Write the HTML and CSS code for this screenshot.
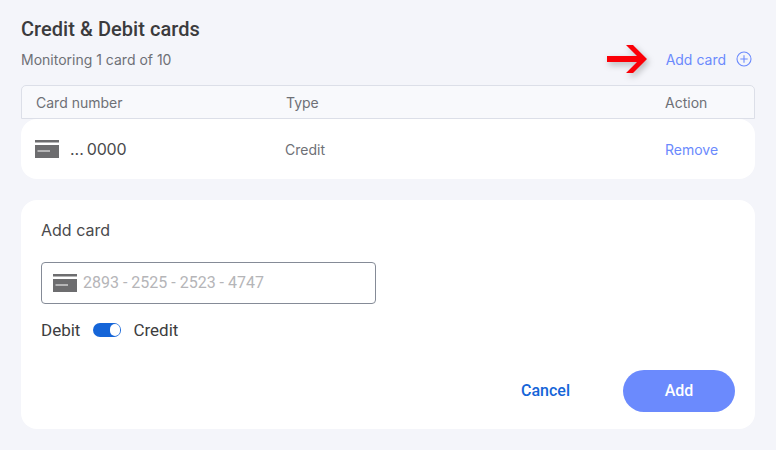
FILE: index.html
```html
<!DOCTYPE html>
<html lang="en">
<head>
<meta charset="utf-8">
<title>Credit &amp; Debit cards</title>
<link rel="stylesheet" href="styles.css">
</head>
<body>
<main class="page">
  <h1 class="title">Credit &amp; Debit cards</h1>
  <div class="sub-row">
    <span class="sub">Monitoring 1 card of 10</span>
    <div class="add-link-wrap">
      <svg class="arrow" width="40" height="32" viewBox="0 0 40 32"><path d="M0 13H31V19H0Z M19 2H26L40 16L26 30H19L30 19V13Z" fill="#fb0007"/></svg>
      <a class="add-link">Add card</a>
      <svg class="plus" width="16" height="16" viewBox="0 0 16 16" fill="none" stroke="#6b8afd" stroke-width="1.1"><circle cx="8" cy="8" r="7"/><path d="M8 4.3V11.7M4.3 8H11.7"/></svg>
    </div>
  </div>
  <div class="table-head">
    <span class="col-num">Card number</span>
    <span class="col-type">Type</span>
    <span class="col-action">Action</span>
  </div>
  <div class="table-row">
    <div class="col-num num-cell">
      <svg class="card-icon" width="24" height="18" viewBox="0 0 24 18"><path d="M0 0H24V2.5H0Z M0 5H24V18H0Z" fill="#6d6d6f"/><path d="M2.5 11H15" stroke="#fff" stroke-width="1"/></svg>
      <span class="masked">...</span><span class="digits">0000</span>
    </div>
    <span class="col-type type-cell">Credit</span>
    <a class="col-action remove">Remove</a>
  </div>
  <section class="form-card">
    <h2 class="form-title">Add card</h2>
    <div class="field">
      <svg class="card-icon" width="24" height="18" viewBox="0 0 24 18"><path d="M0 0H24V2.5H0Z M0 5H24V18H0Z" fill="#6d6d6f"/><path d="M2.5 11H15" stroke="#fff" stroke-width="1"/></svg>
      <span class="placeholder">2893 - 2525 - 2523 - 4747</span>
    </div>
    <div class="toggle-row">
      <span>Debit</span>
      <span class="toggle"><span class="knob"></span></span>
      <span>Credit</span>
    </div>
    <div class="actions">
      <button class="cancel">Cancel</button>
      <button class="add">Add</button>
    </div>
  </section>
</main>
</body>
</html>
```

FILE: styles.css
```css
* { box-sizing: border-box; }
html, body { margin: 0; padding: 0; }
body { width: 776px; height: 450px; overflow: hidden; background: #f4f5fa; font-family: Inter, sans-serif; }
.page { padding: 18px 21px 0; }
.title { margin: 0; height: 22px; font: 500 20px/22px Roboto, sans-serif; letter-spacing: 0.05px; color: #3b3b3d; }
.sub-row { display: flex; align-items: center; justify-content: space-between; height: 30px; margin-top: 4px; margin-bottom: 11px; }
.sub { font-size: 14px; color: #6e7076; }
.add-link-wrap { display: flex; align-items: center; padding-right: 3px; }
.arrow { margin-right: 19px; filter: drop-shadow(2px 3px 3px rgba(0, 0, 0, 0.25)); }
.add-link { font-size: 14px; color: #6b8afd; margin-right: 10px; }
.plus { display: block; }
.table-head { display: flex; align-items: center; height: 34px; background: #f8f9fc; border: 1px solid #dcdfe8; border-radius: 5px 5px 0 0; padding-left: 14px; font-size: 14px; color: #6e7076; }
.col-num { width: 250px; }
.col-type { width: 379px; }
.table-row { display: flex; align-items: center; height: 60px; background: #fff; border-radius: 16px; padding-left: 14px; }
.num-cell { display: flex; align-items: center; font-size: 16px; color: #4a4a4c; }
.card-icon { display: block; flex: none; }
.masked { margin-left: 11px; }
.digits { margin-left: 3px; letter-spacing: -0.2px; }
.type-cell { font-size: 14px; color: #6e7076; }
.remove { margin-left: 1px; font-size: 14px; color: #6b8afd; }
.form-card { margin-top: 21px; height: 229px; background: #fff; border-radius: 16px; padding: 20px 20px 0; }
.form-title { margin: 0; font: 400 16px/20px Inter, sans-serif; color: #4a4a4c; }
.field { display: flex; align-items: center; width: 335px; height: 42px; margin-top: 22px; padding-left: 11px; border: 1px solid #858b97; border-radius: 4px; }
.placeholder { margin-left: 6px; font: 400 16px/20px Roboto, sans-serif; color: #b5b5b8; }
.toggle-row { display: flex; align-items: center; margin-top: 16px; height: 20px; font: 400 17px/20px Roboto, sans-serif; color: #3d3d40; }
.toggle { display: flex; align-items: center; justify-content: flex-end; width: 28px; height: 14px; margin: 0 12px 0 13px; border-radius: 7px; background: #1565d8; padding-right: 1px; }
.knob { width: 10px; height: 12px; border-radius: 6px; background: #fff; }
.actions { display: flex; justify-content: flex-end; align-items: center; margin-top: 30px; }
.cancel { border: 0; background: none; padding: 0; font: 500 16px/20px Roboto, sans-serif; color: #1565d8; margin-right: 53px; }
.add { border: 0; width: 112px; height: 42px; border-radius: 21px; background: #6b8afd; color: #fff; font: 500 16px/20px Roboto, sans-serif; }
```
